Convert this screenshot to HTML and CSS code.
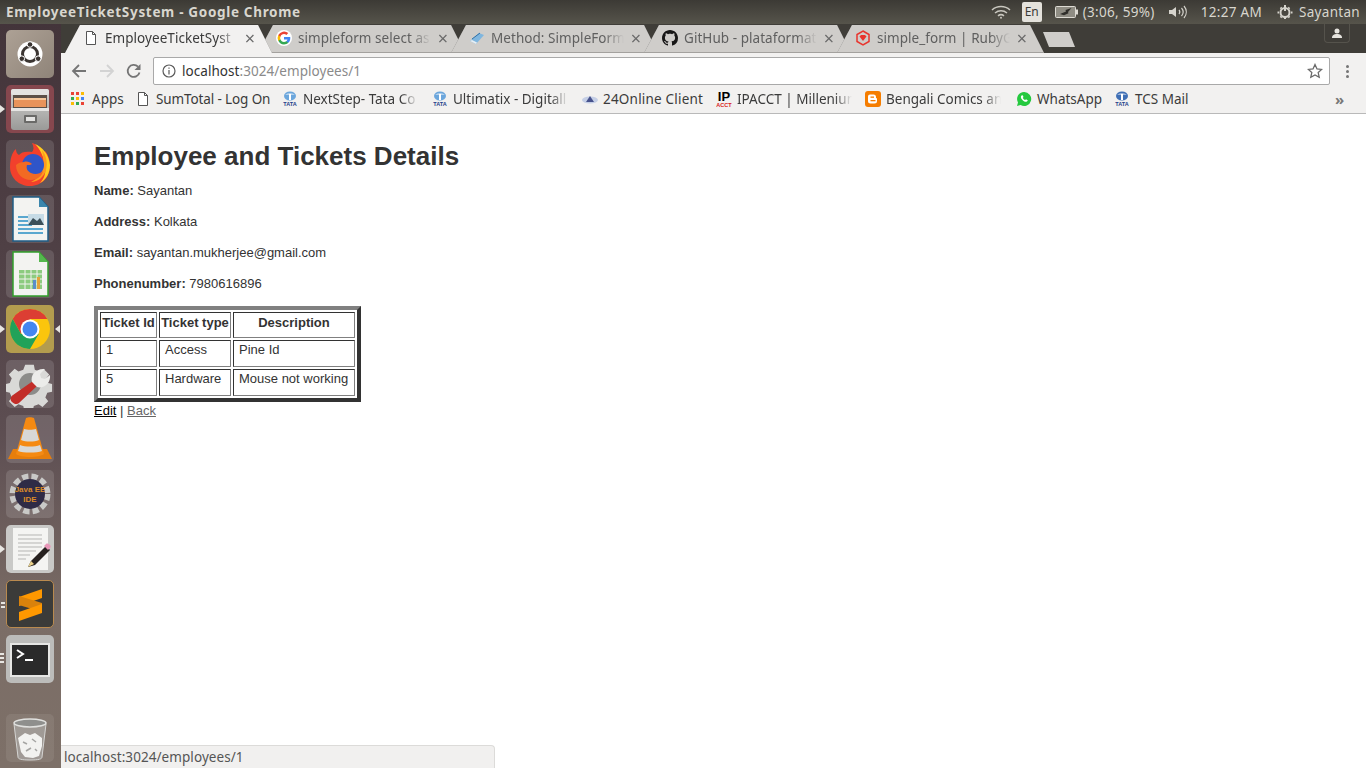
FILE: index.html
```html
<!DOCTYPE html>
<html lang="en">
<head>
    <meta charset="UTF-8">
    <title>EmployeeTicketSystem - Google Chrome</title>
    <link rel="stylesheet" href="styles.css">
</head>
<body>
    <div class="top-panel">
        <div class="window-title">EmployeeTicketSystem - Google Chrome</div>
        <div class="indicators">
            <svg class="ind-wifi" width="20" height="14" viewBox="0 0 20 14" fill="none" stroke="#c9c7bf" stroke-width="1.5"><path d="M1 5c5-4.600 13-4.600 18 0"/><path d="M4 8c3.500-3 8.500-3 12 0"/><path d="M7 10.800c1.800-1.400 4.200-1.400 6 0"/><circle cx="10" cy="12.800" r="1" fill="#c9c7bf" stroke="none"/></svg>
            <div class="ind-lang">En</div>
            <svg class="ind-battery" width="24" height="12" viewBox="0 0 24 12"><rect x=".5" y=".5" width="20" height="11" rx="1" fill="#8f8d84" stroke="#dddbd4"/><rect x="21" y="3.500" width="2" height="5" fill="#dddbd4"/><path d="M5 8l6-2.500-.5-1.500 6-2-3.500 4 .5 1.300-4.500 2z" fill="#2f2e2a"/></svg>
            <span class="ind-text ind-time-left">(3:06, 59%)</span>
            <svg class="ind-sound" width="20" height="14" viewBox="0 0 20 14" fill="none" stroke="#d5d3cc" stroke-width="1.200"><path d="M1 5h3l4-3v10l-4-3H1z" fill="#d5d3cc" stroke="none"/><path d="M11 5c1 1.200 1 2.800 0 4"/><path d="M13.500 3c2 2.400 2 5.600 0 8"/><path d="M16 1c3 3.600 3 8.400 0 12"/></svg>
            <span class="ind-text ind-clock">12:27 AM</span>
            <svg class="ind-power" width="16" height="16" viewBox="0 0 16 16" fill="none" stroke="#d5d3cc" stroke-width="2"><circle cx="8" cy="8.500" r="4.500"/><path d="M8 1v6M8 13v2M2 8.500H.5M15.500 8.500H14M3.500 3.500l1 1M11.500 4.500l1-1M3.500 13.500l1-1M11.500 12.500l1 1"/></svg>
            <span class="ind-text">Sayantan</span>
        </div>
    </div>

    <div class="desktop">
        <div class="launcher">
            <div class="tile tile-dash">
                <svg width="48" height="48" viewBox="0 0 48 48"><circle cx="24" cy="24" r="12.500" fill="#fff"/><circle cx="24" cy="24" r="7.500" fill="none" stroke="#3b3532" stroke-width="3"/><circle cx="24" cy="14.500" r="2.800" fill="#3b3532" stroke="#fff"/><circle cx="15.800" cy="28.700" r="2.800" fill="#3b3532" stroke="#fff"/><circle cx="32.200" cy="28.700" r="2.800" fill="#3b3532" stroke="#fff"/></svg>
            </div>
            <div class="tile tile-files marked">
                <svg width="48" height="48" viewBox="0 0 48 48"><defs><linearGradient id="cab" x1="0" y1="0" x2="0" y2="1"><stop offset="0" stop-color="#d2d2d0"/><stop offset="1" stop-color="#9a9a98"/></linearGradient></defs><rect x="5" y="4" width="38" height="41" rx="3" fill="url(#cab)"/><rect x="5" y="4" width="38" height="6" rx="2" fill="#e3e3e1"/><rect x="7" y="10" width="34" height="13" fill="#5b5048"/><rect x="8" y="13" width="32" height="9" fill="#e8935a"/><rect x="8" y="13" width="32" height="2" fill="#f5c79b"/><rect x="5" y="23" width="38" height="3" fill="#e6e5e3"/><rect x="18" y="30" width="13" height="8" rx="1" fill="#6a6a68"/><rect x="20" y="32" width="9" height="4" fill="#e4e4e2"/></svg>
            </div>
            <div class="tile tile-plain">
                <svg width="48" height="48" viewBox="0 0 48 48"><path d="M4 27c0 11 9 19 20 19 12 0 20-9 20-20 0-6-2-12-5-15l-1 5C36 9 31 4 26 3c2 4 2 7 0 9-6-1-11 0-13 3-2-1-3-3-3-6-4 3-6 10-6 18z" fill="#f2402c"/><path d="M29 4c7 3 14 10 15 21 0 8-4 15-10 18 5-5 6-11 5-18-1-8-5-16-10-21z" fill="#ffcb1f"/><path d="M36 10c4 5 6 12 4 20-2 7-8 12-15 12 6-3 11-8 12-15 1-6 0-12-1-17z" fill="#ff9a1f"/><circle cx="27" cy="25" r="11" fill="#2f55c9"/><path d="M10 25c0 9 7 15 15 15 6 0 11-4 12-9-3 3-8 4-12 2-4-2-5-5-4-8 2 0 4 0 5-1-2-2-5-3-8-2-3 0-6 1-8 3z" fill="#f26a23"/></svg>
            </div>
            <div class="tile tile-plain">
                <svg width="48" height="48" viewBox="0 0 48 48"><path d="M7 2h26l9 10v34H7z" fill="#f3f3f1" stroke="#1f5e86" stroke-width="1.500"/><path d="M33 2l9 10h-9z" fill="#3b86ad"/><rect x="12" y="21" width="14" height="2" fill="#5aa7cf"/><rect x="12" y="25" width="14" height="2" fill="#5aa7cf"/><rect x="12" y="29" width="14" height="2" fill="#5aa7cf"/><rect x="12" y="33" width="25" height="2" fill="#5aa7cf"/><rect x="12" y="37" width="25" height="2" fill="#5aa7cf"/><rect x="22" y="19" width="16" height="11" fill="#c6dbe6"/><path d="M22 30l5-7 4 3 3-3 4 7z" fill="#3c4f58"/></svg>
            </div>
            <div class="tile tile-plain">
                <svg width="48" height="48" viewBox="0 0 48 48"><path d="M7 2h26l9 10v34H7z" fill="#f3f3f1" stroke="#33a02c" stroke-width="1.500"/><path d="M33 2l9 10h-9z" fill="#55b84e"/><rect x="13" y="20" width="23" height="19" fill="#8ccb7f"/><path d="M13 24h23M13 29h23M13 34h23M19 20v19M25 20v19M31 20v19" stroke="#f3f3f1"/><rect x="27" y="30" width="3" height="9" fill="#5b8dc9"/><rect x="31" y="27" width="3" height="12" fill="#e2a33c"/></svg>
            </div>
            <div class="tile tile-chrome marked marked-both">
                <svg width="48" height="48" viewBox="0 0 48 48"><circle cx="24" cy="24" r="20" fill="#fbc50d"/><path d="M24 4a20 20 0 0 0-17.300 10L15 29l9-15h17.300A20 20 0 0 0 24 4z" fill="#dc3e33"/><path d="M6.700 14A20 20 0 0 0 24 44l8.700-15H15z" fill="#21a259"/><circle cx="24" cy="24" r="9.500" fill="#fff"/><circle cx="24" cy="24" r="7.500" fill="#4486f0"/></svg>
            </div>
            <div class="tile tile-plain">
                <svg width="48" height="48" viewBox="0 0 48 48"><path d="M20 4h9l1 5 5 2 4-3 6 6-3 4 2 5 4 1v8l-5 1-2 5 3 4-6 6-4-3-5 2-1 4h-9l-1-4-5-2-4 3-6-6 3-4-2-5-4-1v-8l4-1 2-5-3-4 6-6 4 3 5-2z" fill="#d9d9d7" transform="translate(0 1) scale(.96)"/><circle cx="24" cy="24" r="11" fill="#8c8c8a"/><path d="M6 42c-2-2-2-5 1-7l20-14 4 5-18 17c-2 2-5 1-7-1z" fill="#c22d28"/><path d="M26 22c-2-7 4-14 13-13l-5 5 1 4 4 1 5-4c1 8-6 14-13 12z" fill="#ececea"/></svg>
            </div>
            <div class="tile tile-plain">
                <svg width="48" height="48" viewBox="0 0 48 48"><path d="M7 34h34l5 10H2z" fill="#e67e0c"/><path d="M20 3c2-1 6-1 8 0l10 36c-5 4-23 4-28 0z" fill="#f58a12"/><path d="M18 14c3 1 9 1 12 0l3 11c-5 2-13 2-18 0z" fill="#d8d8d6"/><path d="M14 30c5 2 15 2 20 0l2 6c-5 2-19 2-24 0z" fill="#d8d8d6"/></svg>
            </div>
            <div class="tile tile-plain">
                <svg width="48" height="48" viewBox="0 0 48 48"><circle cx="24" cy="24" r="17" fill="none" stroke="#c9c9c7" stroke-width="7" stroke-dasharray="6 3"/><circle cx="24" cy="24" r="15" fill="#2f2b46"/><text class="ide-text" x="24" y="22" text-anchor="middle">Java EE</text><text class="ide-text" x="24" y="32" text-anchor="middle">IDE</text></svg>
            </div>
            <div class="tile tile-light marked">
                <svg width="48" height="48" viewBox="0 0 48 48"><rect x="7" y="3" width="35" height="42" fill="#f4f4f2"/><path d="M12 10h24M12 14h24M12 18h24M12 22h24M12 26h18M12 30h12M12 34h8" stroke="#b5b5b3"/><path d="M22 42l3-6 15-15 4 4-15 15z" fill="#26211f"/><path d="M38 21l2-2c1-1 3 0 4 1s1 2 0 3l-2 2z" fill="#e898b9"/><path d="M22 42l3-6 3 3z" fill="#ecd28a"/></svg>
            </div>
            <div class="tile tile-sublime marks-two">
                <svg width="48" height="48" viewBox="0 0 48 48"><path d="M13 17l23-8v9l-23 8z" fill="#ff9800"/><path d="M36 23l-23-7v9l23 7z" fill="#d9820c"/><path d="M13 32l23-8v9l-23 8z" fill="#ff9800"/></svg>
            </div>
            <div class="tile tile-term marks-three">
                <svg width="48" height="48" viewBox="0 0 48 48"><rect x="4" y="8" width="40" height="34" fill="#e6e6e4"/><rect x="6" y="10" width="36" height="30" fill="#2a2a2a"/><path d="M11 15l6 4-6 4" fill="none" stroke="#fff" stroke-width="2"/><rect x="19" y="24" width="8" height="2" fill="#fff"/></svg>
            </div>
            <div class="tile tile-trash">
                <svg width="48" height="48" viewBox="0 0 48 48"><path d="M8 10l4 33c0 2 3 3 12 3s12-1 12-3l4-33z" fill="#b5b5b3" fill-opacity=".55" stroke="#d5d5d3"/><ellipse cx="24" cy="9" rx="16" ry="4" fill="#8f8f8d" stroke="#e1e1df" stroke-width="1.500"/><path d="M12 24l7-5 5 2 5-2 7 5 0 8-3 10-6 2-8-1-4-5z" fill="#f2f2f0"/><path d="M17 28l4 2M26 25l4 3M20 37l5-3M29 35l2 2" stroke="#a5a5a3" stroke-width="1.500"/></svg>
            </div>
        </div>

        <div class="browser">
            <div class="tab-strip">
                <div class="tab tab-active">
                    <svg class="favicon" viewBox="0 0 16 16" fill="#fff" stroke="#555"><path d="M3.500 1.500h6l3 3v10h-9z"/><path d="M9.500 1.500v3h3" fill="none"/></svg>
                    <span class="tab-title">EmployeeTicketSyst</span>
                    <span class="tab-close">×</span>
                </div>
                <div class="tab">
                    <svg class="favicon" viewBox="0 0 16 16"><circle cx="8" cy="8" r="8" fill="#fff"/><path d="M14.300 8.200c0-.5 0-.9-.1-1.300H8v2.500h3.500c-.2.800-.6 1.400-1.300 1.900v1.500h2.100c1.300-1.100 2-2.700 2-4.600z" fill="#4285f4"/><path d="M8 14.500c1.800 0 3.200-.6 4.300-1.700l-2.100-1.500c-.6.400-1.300.6-2.200.6-1.700 0-3.100-1.100-3.600-2.700H2.300v1.600A6.500 6.500 0 0 0 8 14.500z" fill="#34a853"/><path d="M4.400 9.200a3.900 3.900 0 0 1 0-2.500V5.100H2.300a6.500 6.500 0 0 0 0 5.800z" fill="#fbbc05"/><path d="M8 4.100c.9 0 1.800.3 2.400.9l1.900-1.900A6.500 6.500 0 0 0 2.300 5.100l2.100 1.600C4.900 5.200 6.300 4.100 8 4.100z" fill="#ea4335"/></svg>
                    <span class="tab-title">simpleform select as</span>
                    <span class="tab-close">×</span>
                </div>
                <div class="tab">
                    <svg class="favicon" viewBox="0 0 16 16"><path d="M1 11l9-8 5 2-8 9z" fill="#7fb6df"/><path d="M1 11l6 3 1-1.500-5-2.500z" fill="#e8eef2"/><path d="M3 9l8-6" stroke="#2e6fa5"/></svg>
                    <span class="tab-title">Method: SimpleForm</span>
                    <span class="tab-close">×</span>
                </div>
                <div class="tab">
                    <svg class="favicon" viewBox="0 0 16 16"><path fill="#181717" d="M8 0C3.580 0 0 3.580 0 8c0 3.540 2.290 6.530 5.470 7.590.4.070.55-.17.55-.38 0-.19-.01-.82-.01-1.490-2.010.37-2.530-.49-2.690-.94-.09-.23-.48-.94-.82-1.130-.28-.15-.68-.52-.01-.53.630-.01 1.080.58 1.230.82.720 1.210 1.870.87 2.330.66.070-.52.280-.87.510-1.070-1.780-.2-3.640-.89-3.640-3.950 0-.87.310-1.590.82-2.150-.08-.2-.36-1.020.08-2.120 0 0 .67-.21 2.200.82.640-.18 1.320-.27 2-.27s1.360.09 2 .27c1.530-1.040 2.200-.82 2.200-.82.440 1.100.160 1.920.08 2.120.51.560.82 1.270.82 2.150 0 3.070-1.870 3.750-3.650 3.950.29.250.54.730.54 1.480 0 1.070-.01 1.930-.01 2.200 0 .21.150.46.550.38A8.010 8.010 0 0 0 16 8c0-4.420-3.580-8-8-8z"/></svg>
                    <span class="tab-title">GitHub - plataformat</span>
                    <span class="tab-close">×</span>
                </div>
                <div class="tab">
                    <svg class="favicon" viewBox="0 0 16 16"><path d="M8 1l6 3.500v7L8 15l-6-3.500v-7z" fill="none" stroke="#e8352e" stroke-width="1.500"/><path d="M4.500 6.500L6 5h4l1.500 1.500L8 11z" fill="#e8352e"/></svg>
                    <span class="tab-title">simple_form | RubyG</span>
                    <span class="tab-close">×</span>
                </div>
                <div class="new-tab"></div>
                <div class="profile-btn">
                    <svg width="12" height="10" viewBox="0 0 12 10" fill="#e6e4de"><circle cx="6" cy="3" r="2.500"/><path d="M1 10c0-3 2-4 5-4s5 1 5 4z"/></svg>
                </div>
            </div>

            <div class="toolbar">
                <svg class="tool-icon" viewBox="0 0 16 16" fill="none" stroke="#757575" stroke-width="1.800"><path d="M15 8H2M8 2L2 8l6 6"/></svg>
                <svg class="tool-icon tool-fwd" viewBox="0 0 16 16" fill="none" stroke="#d3d3d3" stroke-width="1.800"><path d="M1 8h13M8 2l6 6-6 6"/></svg>
                <svg class="tool-icon" viewBox="0 0 16 16" fill="none" stroke="#757575" stroke-width="1.800"><path d="M13.500 9.500A6 6 0 1 1 12 3.700"/><path d="M14.500 1v6h-6z" fill="#757575" stroke="none"/></svg>
                <div class="omnibox">
                    <svg class="info-icon" viewBox="0 0 14 14" fill="none" stroke="#5a5a5a" stroke-width="1.200"><circle cx="7" cy="7" r="6"/><path d="M7 6v4.500M7 3.500v1.200"/></svg>
                    <span class="url"><span class="url-host">localhost</span>:3024/employees/1</span>
                    <svg class="star-icon" viewBox="0 0 16 16" fill="none" stroke="#6a6a6a" stroke-width="1.300"><path d="M8 1.500l2 4.400 4.700.5-3.500 3.200 1 4.700L8 11.900l-4.200 2.400 1-4.700L1.300 6.400 6 5.900z"/></svg>
                </div>
                <div class="menu-dots"><i></i><i></i><i></i></div>
            </div>

            <div class="bookmarks">
                <div class="bm">
                    <svg class="favicon apps-icon" viewBox="0 0 13 13"><rect width="3" height="3" fill="#ea4335"/><rect x="5" width="3" height="3" fill="#ea4335"/><rect x="10" width="3" height="3" fill="#fbbc05"/><rect y="5" width="3" height="3" fill="#34a853"/><rect x="5" y="5" width="3" height="3" fill="#fbbc05"/><rect x="10" y="5" width="3" height="3" fill="#4285f4"/><rect y="10" width="3" height="3" fill="#fbbc05"/><rect x="5" y="10" width="3" height="3" fill="#34a853"/><rect x="10" y="10" width="3" height="3" fill="#ea4335"/></svg>
                    <span class="bm-title">Apps</span>
                </div>
                <div class="bm">
                    <svg class="favicon" viewBox="0 0 16 16" fill="#fff" stroke="#555"><path d="M3.500 1.500h6l3 3v10h-9z"/><path d="M9.500 1.500v3h3" fill="none"/></svg>
                    <span class="bm-title bm-tight">SumTotal - Log On</span>
                </div>
                <div class="bm">
                    <svg class="favicon" viewBox="0 0 16 16"><ellipse cx="8" cy="5" rx="6" ry="4.500" fill="#6ba6dc"/><path d="M3 3.500c3-1.500 7-1.500 10 0M7 3h2v6H7z" fill="#fff"/><text class="tata-text" x="8" y="15" text-anchor="middle">TATA</text></svg>
                    <span class="bm-title bm-fade">NextStep- Tata Co</span>
                </div>
                <div class="bm">
                    <svg class="favicon" viewBox="0 0 16 16"><ellipse cx="8" cy="5" rx="6" ry="4.500" fill="#6ba6dc"/><path d="M3 3.500c3-1.500 7-1.500 10 0M7 3h2v6H7z" fill="#fff"/><text class="tata-text" x="8" y="15" text-anchor="middle">TATA</text></svg>
                    <span class="bm-title bm-fade">Ultimatix - Digitall</span>
                </div>
                <div class="bm">
                    <svg class="favicon" viewBox="0 0 16 16"><ellipse cx="8" cy="9" rx="8" ry="3.500" fill="#c5cfe6"/><path d="M8 5l4 6H4z" fill="#47528c"/></svg>
                    <span class="bm-title bm-wide">24Online Client</span>
                </div>
                <div class="bm">
                    <svg class="favicon" viewBox="0 0 16 16"><text class="ip-text" x="8" y="10" text-anchor="middle">IP</text><text class="acct-text" x="8" y="15.500" text-anchor="middle">ACCT</text></svg>
                    <span class="bm-title bm-fade">IPACCT | Milleniun</span>
                </div>
                <div class="bm">
                    <svg class="favicon" viewBox="0 0 16 16"><rect width="16" height="16" rx="3" fill="#f57d00"/><path d="M5 3.500h3.500a2.500 2.500 0 0 1 2.500 2.500v1l1 .5V10a2.500 2.500 0 0 1-2.500 2.500H5.500A2.500 2.500 0 0 1 3 10V5.500a2 2 0 0 1 2-2z" fill="#fff"/><rect x="5.500" y="5.500" width="3.500" height="1.300" fill="#f57d00"/><rect x="5.500" y="9" width="5" height="1.300" fill="#f57d00"/></svg>
                    <span class="bm-title bm-fade">Bengali Comics an</span>
                </div>
                <div class="bm">
                    <svg class="favicon" viewBox="0 0 16 16"><path d="M8 1a7 7 0 0 0-6 10.500L1 15l3.600-1A7 7 0 1 0 8 1z" fill="#25c93f"/><path d="M5.500 4.500c-1 1-.8 2.500.5 4s3 2.500 4.300 2.300c1-.2 1.500-1 1.400-1.500l-1.700-1-.8.800c-1-.3-2-1.300-2.400-2.300l.7-.8-.8-1.700z" fill="#fff"/></svg>
                    <span class="bm-title">WhatsApp</span>
                </div>
                <div class="bm">
                    <svg class="favicon" viewBox="0 0 16 16"><ellipse cx="8" cy="5" rx="6" ry="4.500" fill="#3f6fb5"/><path d="M3 3.500c3-1.500 7-1.500 10 0M7 3h2v6H7z" fill="#fff"/><text class="tata-text" x="8" y="15" text-anchor="middle">TATA</text></svg>
                    <span class="bm-title">TCS Mail</span>
                </div>
                <div class="bm-more">»</div>
            </div>

            <div class="page">
                <h1>Employee and Tickets Details</h1>
                <p><strong>Name:</strong> Sayantan</p>
                <p><strong>Address:</strong> Kolkata</p>
                <p><strong>Email:</strong> sayantan.mukherjee@gmail.com</p>
                <p><strong>Phonenumber:</strong> 7980616896</p>
                <table class="tickets">
                    <tr>
                        <th class="col-id">Ticket Id</th>
                        <th class="col-type">Ticket type</th>
                        <th>Description</th>
                    </tr>
                    <tr>
                        <td>1</td>
                        <td>Access</td>
                        <td>Pine Id</td>
                    </tr>
                    <tr>
                        <td>5</td>
                        <td>Hardware</td>
                        <td>Mouse not working</td>
                    </tr>
                </table>
                <div class="page-links"><a class="link-edit" href="#">Edit</a> | <a class="link-back" href="#">Back</a></div>
            </div>

            <div class="status-bubble">localhost:3024/employees/1</div>
        </div>
    </div>
</body>
</html>
```

FILE: styles.css
```css
* {
    margin: 0;
    padding: 0;
    box-sizing: border-box;
}

html, body {
    height: 100%;
    overflow: hidden;
}

body {
    display: flex;
    flex-direction: column;
    font-family: "Noto Sans", "Open Sans", sans-serif;
    background: #fff;
}

/* ubuntu top panel */
.top-panel {
    height: 24px;
    flex: none;
    display: flex;
    justify-content: space-between;
    align-items: center;
    background: linear-gradient(#3c3a35, #56544b);
    color: #d8d6ce;
    padding: 0 6px;
}

.window-title {
    font-size: 13.5px;
    font-weight: 700;
    letter-spacing: 0.68px;
}

.indicators {
    display: flex;
    align-items: center;
}

.ind-wifi {
    margin-right: 11px;
}

.ind-lang {
    width: 20px;
    height: 20px;
    background: #e4e2dc;
    color: #3a3a36;
    border-radius: 2px;
    font-size: 12px;
    line-height: 20px;
    text-align: center;
    margin-right: 13px;
}

.ind-battery {
    margin-right: 4px;
}

.ind-text {
    font-size: 13.5px;
    letter-spacing: 0.3px;
    white-space: nowrap;
}

.ind-time-left {
    margin-right: 13px;
}

.ind-sound {
    margin-right: 13px;
}

.ind-clock {
    margin-right: 15px;
}

.ind-power {
    margin-right: 6px;
}

.desktop {
    flex: 1;
    display: flex;
    min-height: 0;
}

/* launcher on the left */
.launcher {
    width: 61px;
    flex: none;
    display: flex;
    flex-direction: column;
    align-items: center;
    gap: 7px;
    padding: 6px 1px 6px 0;
    background: linear-gradient(#43343a, #4f4045 30%, #5d4e52 55%, #7b6d66 80%, #7d7068);
}

.tile {
    width: 48px;
    height: 48px;
    flex: none;
    border-radius: 5px;
    background: rgba(255, 255, 255, 0.13);
    position: relative;
}

.tile svg {
    display: block;
}

.tile-dash {
    background: linear-gradient(135deg, #ada195, #8f8479);
}

.tile-files {
    background: #86474e;
}

.tile-chrome {
    background: #b39c4e;
}

.tile-light {
    background: #c9c9c7;
}

.tile-sublime {
    background: #3b3b39;
    border: 1px solid #b98a4f;
}

.tile-sublime svg {
    margin: -1px;
}

.tile-term {
    background: #bcbcba;
}

.tile-trash {
    margin-top: auto;
    background: rgba(255, 255, 255, 0.08);
}

.ide-text {
    font-family: "Liberation Sans", sans-serif;
    font-size: 8px;
    font-weight: 700;
    fill: #d98a2a;
}

.marked::before,
.marked-both::after {
    content: "";
    position: absolute;
    top: 20px;
    border: 4px solid transparent;
}

.marked::before {
    left: -6px;
    border-left: 5px solid #e8e6e2;
}

.marked-both::after {
    right: -6px;
    border-right: 5px solid #e8e6e2;
}

.marks-two::before,
.marks-three::before {
    content: "";
    position: absolute;
    left: -6px;
    width: 4px;
    height: 2px;
    background: #e8e6e2;
}

.marks-two::before {
    top: 21px;
    box-shadow: 0 4px 0 #e8e6e2;
}

.marks-three::before {
    top: 18px;
    box-shadow: 0 4px 0 #e8e6e2, 0 8px 0 #e8e6e2;
}

/* chrome window */
.browser {
    flex: 1;
    min-width: 0;
    display: flex;
    flex-direction: column;
    position: relative;
}

.tab-strip {
    height: 29px;
    flex: none;
    display: flex;
    padding: 1px 0 0 4px;
    background: #3f3d38;
}

.tab {
    width: 207px;
    height: 28px;
    flex: none;
    margin-right: -14px;
    display: flex;
    align-items: center;
    padding: 0 15px 2px 18px;
    position: relative;
    color: #5f5f5f;
    filter: drop-shadow(0 0 0.5px #6f6f6f);
}

.tab::before {
    content: "";
    position: absolute;
    inset: 0;
    background: #cfcdca;
    clip-path: polygon(0 100%, 15px 0, calc(100% - 14px) 0, 100% 100%);
}

.tab::after {
    content: "";
    position: absolute;
    left: 0;
    right: 0;
    bottom: 0;
    height: 1px;
    background: #a3a19e;
}

.tab-active {
    color: #3b3b3b;
    z-index: 2;
}

.tab-active::before {
    background: #f2f1f0;
}

.tab-active::after {
    display: none;
}

.tab > * {
    position: relative;
}

.favicon {
    width: 16px;
    height: 16px;
    flex: none;
}

.tab-title {
    flex: 1;
    min-width: 0;
    margin-left: 6px;
    font-size: 13.5px;
    letter-spacing: 0.05px;
    white-space: nowrap;
    overflow: hidden;
    -webkit-mask-image: linear-gradient(to right, #000 85%, transparent);
    mask-image: linear-gradient(to right, #000 85%, transparent);
}

.tab-close {
    width: 14px;
    margin-left: 5px;
    text-align: center;
    font-size: 18px;
    line-height: 16px;
    color: #6a6a6a;
}

.new-tab {
    width: 32px;
    height: 15px;
    flex: none;
    margin: 7px 0 0 13px;
    background: #cfcdca;
    clip-path: polygon(0 0, 26px 0, 100% 100%, 6px 100%);
}

.profile-btn {
    width: 26px;
    height: 19px;
    flex: none;
    margin: -1px 16px 0 auto;
    border: 1px solid #55534c;
    border-top: none;
    border-radius: 0 0 4px 4px;
    display: flex;
    align-items: center;
    justify-content: center;
}

.toolbar {
    height: 32px;
    flex: none;
    display: flex;
    align-items: center;
    padding: 4px 0 0 10px;
    background: #f2f1f0;
}

.tool-icon {
    width: 16px;
    height: 16px;
    flex: none;
    margin-right: 12px;
}

.tool-fwd {
    margin-right: 11px;
}

.omnibox {
    width: 1177px;
    height: 28px;
    flex: none;
    margin-left: -1px;
    display: flex;
    align-items: center;
    padding: 0 6px 0 8px;
    background: #fff;
    border: 1px solid #a9a9a9;
    border-radius: 2px;
}

.info-icon {
    width: 14px;
    height: 14px;
    flex: none;
}

.url {
    flex: 1;
    margin-left: 6px;
    font-size: 13.5px;
    letter-spacing: 0.05px;
    color: #8a8a8a;
}

.url-host {
    color: #333;
}

.star-icon {
    width: 16px;
    height: 16px;
    flex: none;
}

.menu-dots {
    margin-left: 16px;
    display: flex;
    flex-direction: column;
    gap: 2px;
}

.menu-dots i {
    width: 3px;
    height: 3px;
    border-radius: 50%;
    background: #757575;
}

.bookmarks {
    height: 29px;
    flex: none;
    display: grid;
    grid-template-columns: 64px 147px 150px 150px 134px 149px 151px 98px 210px 1fr;
    align-items: center;
    padding: 0 0 1px 10px;
    background: #f2f1f0;
    border-bottom: 1px solid #b9b9b9;
}

.bm {
    display: flex;
    align-items: center;
    min-width: 0;
    color: #3b3b3b;
}

.apps-icon {
    width: 13px;
    height: 13px;
    margin-right: 3px;
}

.bm-title {
    margin-left: 5px;
    font-size: 13.5px;
    white-space: nowrap;
}

.bm-tight {
    letter-spacing: -0.12px;
}

.bm-wide {
    letter-spacing: 0.2px;
}

.bm-fade {
    width: 115px;
    overflow: hidden;
    -webkit-mask-image: linear-gradient(to right, #000 85%, transparent);
    mask-image: linear-gradient(to right, #000 85%, transparent);
}

.tata-text {
    font-family: "Liberation Sans", sans-serif;
    font-size: 5.500px;
    font-weight: 700;
    fill: #1f3f8a;
}

.ip-text {
    font-family: "Liberation Sans", sans-serif;
    font-size: 13px;
    font-weight: 700;
    fill: #000;
}

.acct-text {
    font-family: "Liberation Sans", sans-serif;
    font-size: 5.500px;
    font-weight: 700;
    fill: #d92020;
}

.bm-more {
    font-size: 15px;
    font-weight: 700;
    color: #777;
    padding-left: 11px;
}

/* the actual page */
.page {
    flex: 1;
    min-height: 0;
    padding: 26px 33px 0;
    background: #fff;
    color: #333;
    font-family: "Liberation Sans", Arial, sans-serif;
    font-size: 13px;
    line-height: 15px;
}

h1 {
    font-size: 26px;
    line-height: 32px;
    margin-bottom: 11px;
}

p {
    margin-bottom: 16px;
}

.tickets {
    width: 267px;
    table-layout: fixed;
    border-spacing: 2px;
    border-width: 4px;
    border-style: solid;
    border-color: #808080 #333 #333 #808080;
    margin-top: -1px;
}

.col-id {
    width: 57px;
}

.col-type {
    width: 72px;
}

.tickets th,
.tickets td {
    border-width: 1px;
    border-style: solid;
    border-color: #333 #808080 #808080 #333;
    vertical-align: top;
}

.tickets th {
    padding: 2px 1px 7px;
    font-weight: bold;
    white-space: nowrap;
}

.tickets td {
    padding: 1px 5px 9px;
}

.page-links {
    margin-top: 1px;
}

.link-edit {
    color: #000;
}

.link-back {
    color: #666;
}

.status-bubble {
    width: 434px;
    height: 23px;
    position: absolute;
    left: 0;
    bottom: 0;
    padding-left: 3px;
    font-size: 13.5px;
    letter-spacing: 0.07px;
    line-height: 23px;
    color: #555;
    background: #f1f0ef;
    border-top: 1px solid #dcdbd9;
    border-right: 1px solid #dcdbd9;
    border-radius: 0 4px 0 0;
}
```
